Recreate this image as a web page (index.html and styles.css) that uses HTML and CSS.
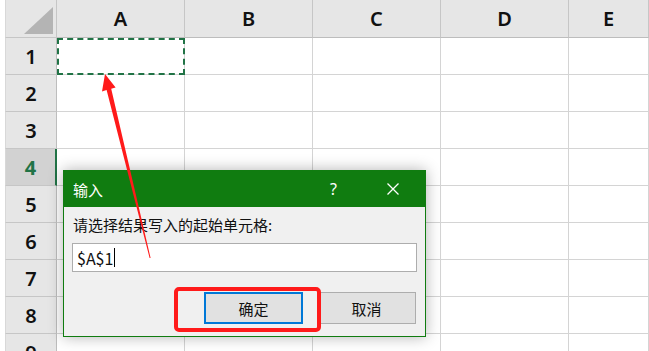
FILE: index.html
```html
<!doctype html>
<html>
  <head>
    <meta charset="UTF-8" />
    <title>输入</title>
    <link rel="stylesheet" href="styles.css">
  </head>
  <body>
    <div class="sheet">
      <div class="corner"><span class="tri"></span></div>
      <div class="colhead">A</div>
      <div class="colhead">B</div>
      <div class="colhead">C</div>
      <div class="colhead">D</div>
      <div class="colhead">E</div>

      <div class="rowhead">1</div>
      <div class="cell marked"></div><div class="cell"></div><div class="cell"></div><div class="cell"></div><div class="cell"></div>
      <div class="rowhead">2</div>
      <div class="cell"></div><div class="cell"></div><div class="cell"></div><div class="cell"></div><div class="cell"></div>
      <div class="rowhead">3</div>
      <div class="cell"></div><div class="cell"></div><div class="cell"></div><div class="cell"></div><div class="cell"></div>
      <div class="rowhead active">4</div>
      <div class="cell"></div><div class="cell"></div><div class="cell"></div><div class="cell"></div><div class="cell"></div>
      <div class="rowhead">5</div>
      <div class="cell"></div><div class="cell"></div><div class="cell"></div><div class="cell"></div><div class="cell"></div>
      <div class="rowhead">6</div>
      <div class="cell"></div><div class="cell"></div><div class="cell"></div><div class="cell"></div><div class="cell"></div>
      <div class="rowhead">7</div>
      <div class="cell"></div><div class="cell"></div><div class="cell"></div><div class="cell"></div><div class="cell"></div>
      <div class="rowhead">8</div>
      <div class="cell"></div><div class="cell"></div><div class="cell"></div><div class="cell"></div><div class="cell"></div>
      <div class="rowhead">9</div>
      <div class="cell"></div><div class="cell"></div><div class="cell"></div><div class="cell"></div><div class="cell"></div>
    </div>

    <div class="dialog">
      <div class="titlebar">
        <span class="title">输入</span>
        <span class="help">?</span>
        <svg class="close" width="12" height="12" viewBox="0 0 12 12">
          <path d="M0.5 0.5 L11.5 11.5 M11.5 0.5 L0.5 11.5" stroke="#fff" stroke-width="1.3" fill="none" />
        </svg>
      </div>
      <div class="body">
        <div class="label">请选择结果写入的起始单元格:</div>
        <div class="field">$A$1<span class="caret"></span></div>
        <div class="buttons">
          <button type="button" class="btn primary">确定</button>
          <button type="button" class="btn">取消</button>
        </div>
      </div>
    </div>

    <svg class="marks" width="649" height="351" viewBox="0 0 649 351">
      <polygon points="105,74 102,91.5 106.6,90 149.6,258 150.6,258 111.2,88.8 115.6,87.6" fill="#ff1a1a" />
      <rect x="176" y="289" width="143" height="41" rx="3" fill="none" stroke="#ff1a1a" stroke-width="4" />
    </svg>
  </body>
</html>
```

FILE: styles.css
```css
* {
  box-sizing: border-box;
}

body {
  margin: 0;
  width: 649px;
  height: 351px;
  overflow: hidden;
  background: #fff;
  font-family: "Noto Sans CJK SC", "Noto Sans", sans-serif;
}

.sheet {
  display: grid;
  grid-template-columns: 52px 128px 128px 128px 128px 80px;
  grid-template-rows: 38px repeat(9, 37px);
  padding-left: 5px;
  background: #fff;
}

.corner {
  background: #e6e6e6;
  border-right: 1px solid #c6c6c6;
  border-bottom: 1px solid #c6c6c6;
  border-left: 1px solid #d8d8d8;
  display: flex;
  justify-content: flex-end;
  align-items: flex-end;
  padding: 0 3px 3px 0;
}

.tri {
  width: 29px;
  height: 27px;
  background: #b4b4b4;
  clip-path: polygon(100% 0, 100% 100%, 0 100%);
}

.colhead {
  background: #e6e6e6;
  border-right: 1px solid #c6c6c6;
  border-bottom: 1px solid #bdbdbd;
  display: flex;
  align-items: center;
  justify-content: center;
  font-family: "Noto Sans", sans-serif;
  font-size: 20px;
  font-weight: 600;
  color: #111;
  padding-bottom: 1px;
}

.rowhead {
  background: #e6e6e6;
  border-bottom: 1px solid #c6c6c6;
  border-right: 1px solid #bdbdbd;
  border-left: 1px solid #d8d8d8;
  display: flex;
  align-items: center;
  justify-content: center;
  font-family: "Noto Sans", sans-serif;
  font-size: 20px;
  font-weight: 600;
  color: #111;
}

.rowhead.active {
  background: #d2d2d2;
  color: #217346;
  font-weight: 700;
  border-right: 2px solid #217346;
}

.cell {
  border-right: 1px solid #d4d4d4;
  border-bottom: 1px solid #d4d4d4;
}

.cell.marked {
  position: relative;
}

.cell.marked::after {
  content: "";
  position: absolute;
  left: 0;
  top: 0;
  right: -1px;
  bottom: -1px;
  border: 2px dashed #217346;
}

.dialog {
  position: absolute;
  left: 63px;
  top: 170px;
  width: 363px;
  height: 167px;
  border: 1px solid #107c10;
  background: #f0f0f0;
  box-shadow: 0 0 14px rgba(0, 0, 0, 0.3);
  display: flex;
  flex-direction: column;
}

.titlebar {
  height: 36px;
  background: #107c10;
  color: #fff;
  display: flex;
  align-items: center;
  padding: 0 26px 0 9px;
  font-size: 15px;
}

.title {
  flex: 1;
}

.help {
  font-family: "Noto Sans", sans-serif;
  font-size: 16px;
  margin-right: 50px;
}

.body {
  padding: 7px 8px 0 8px;
}

.label {
  font-size: 15px;
  line-height: 22px;
  color: #111;
  padding-left: 1px;
}

.field {
  margin-top: 7px;
  height: 29px;
  background: #fff;
  border: 1px solid #adadad;
  font-size: 16px;
  line-height: 26px;
  padding-left: 4px;
  color: #111;
  display: flex;
  align-items: center;
}

.caret {
  display: inline-block;
  width: 1px;
  height: 19px;
  background: #000;
  margin-left: 1px;
}

.buttons {
  display: flex;
  justify-content: flex-end;
  gap: 14px;
  margin-top: 20px;
  padding-right: 1px;
}

.btn {
  width: 99px;
  height: 32px;
  background: #e1e1e1;
  border: 1px solid #adadad;
  font-family: "Noto Sans CJK SC", sans-serif;
  font-size: 15px;
  color: #111;
  padding: 0;
}

.btn.primary {
  border: 2px solid #0078d7;
}

.marks {
  position: absolute;
  left: 0;
  top: 0;
  pointer-events: none;
}
```
